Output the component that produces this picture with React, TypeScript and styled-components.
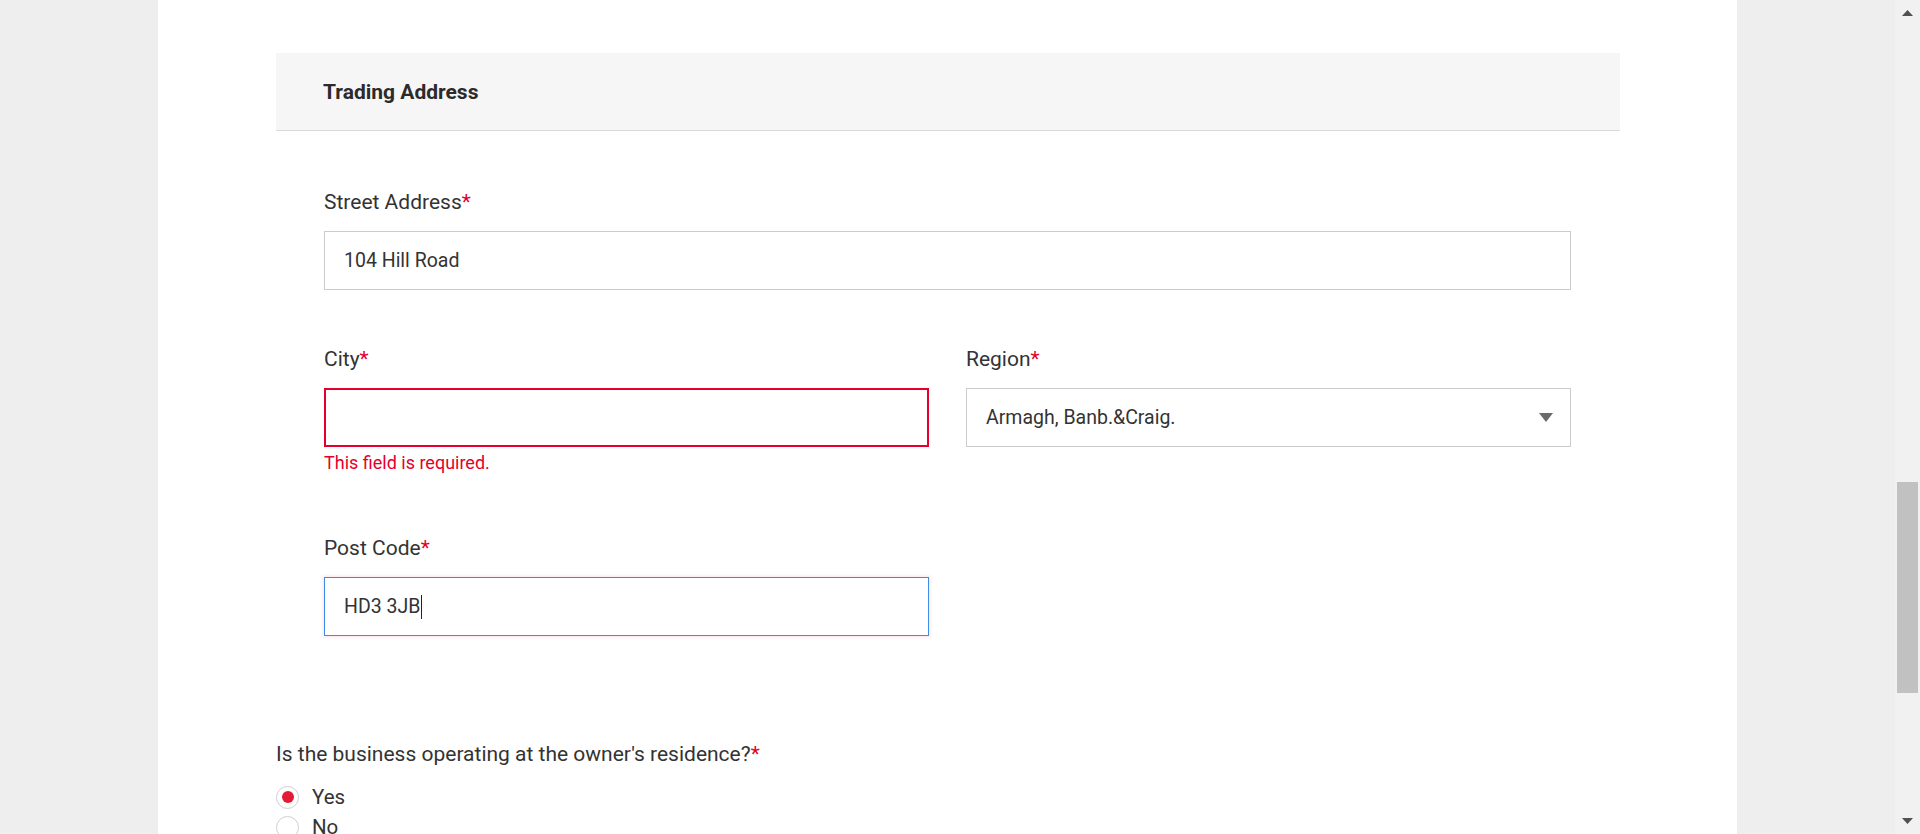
import React from "react";
import styled, { createGlobalStyle } from "styled-components";

const GlobalStyle = createGlobalStyle`
  html, body {
    margin: 0;
    padding: 0;
    height: 100%;
    overflow: hidden;
    background: #eeeeee;
  }
  #root { height: 100%; }
  * { box-sizing: border-box; }
`;

const Screen = styled.div`
  display: flex;
  height: 834px;
  width: 1920px;
  font-family: Roboto, "Liberation Sans", Arial, sans-serif;
  color: #333333;
  overflow: hidden;
`;

const Viewport = styled.div`
  flex: 1;
  background: #eeeeee;
  display: flex;
  justify-content: center;
  overflow: hidden;
`;

const Page = styled.main`
  width: 1579px;
  height: 100%;
  background: #ffffff;
  padding: 53px 117px 0 118px;
`;

const SectionHeader = styled.div`
  height: 78px;
  background: #f6f6f6;
  border-bottom: 1px solid #d9d9d9;
  display: flex;
  align-items: center;
  padding-left: 47px;
  font-size: 21px;
  font-weight: 700;
  color: #2b2b2b;
`;

const Fields = styled.div`
  padding: 59px 49px 0 48px;
  display: flex;
  flex-direction: column;
`;

const Row = styled.div<{ $last?: boolean }>`
  display: grid;
  grid-template-columns: 1fr 1fr;
  column-gap: 37px;
  margin-bottom: ${(p) => (p.$last ? "0" : "62px")};
`;

const Field = styled.div<{ $full?: boolean }>`
  display: flex;
  flex-direction: column;
  margin-bottom: ${(p) => (p.$full ? "57px" : "0")};
`;

const Label = styled.label`
  font-size: 21px;
  line-height: 25px;
  margin-bottom: 16px;
  color: #333333;
`;

const Req = styled.span`
  color: #e4002b;
`;

const Input = styled.div<{ $state?: "error" | "focus" }>`
  height: 59px;
  border: ${(p) =>
    p.$state === "error"
      ? "2px solid #e4002b"
      : p.$state === "focus"
      ? "1px solid #3a8ee8"
      : "1px solid #cccccc"};
  box-shadow: ${(p) =>
    p.$state === "focus" ? "0 0 3px 1px rgba(240, 120, 140, 0.22)" : "none"};
  background: #ffffff;
  display: flex;
  align-items: center;
  padding: 0 ${(p) => (p.$state === "error" ? "18px" : "19px")};
  font-size: 19.5px;
  color: #333333;
`;

const Caret = styled.span`
  display: inline-block;
  width: 1px;
  height: 24px;
  background: #222;
  margin-left: 1px;
`;

const Select = styled(Input)`
  justify-content: space-between;
  padding-right: 17px;
`;

const ErrorText = styled.div`
  font-size: 18px;
  line-height: 22px;
  margin-top: 5px;
  color: #e4002b;
`;

const Question = styled.div`
  margin-top: 106px;
  font-size: 21px;
  line-height: 25px;
  color: #333333;
`;

const RadioGroup = styled.div`
  margin-top: 15px;
  display: flex;
  flex-direction: column;
`;

const RadioRow = styled.div`
  display: flex;
  align-items: center;
  height: 30px;
  gap: 13px;
  font-size: 20.5px;
  color: #333333;
`;

const RadioCircle = styled.span<{ $checked?: boolean }>`
  width: 23px;
  height: 23px;
  border-radius: 50%;
  border: 1px solid #cfcfcf;
  background: #fff;
  display: flex;
  align-items: center;
  justify-content: center;
  &::after {
    content: "";
    width: 12px;
    height: 12px;
    border-radius: 50%;
    background: ${(p) => (p.$checked ? "#e31b35" : "transparent")};
  }
`;

const Scrollbar = styled.div`
  width: 25px;
  height: 100%;
  background: #f1f1f1;
  display: flex;
  flex-direction: column;
  align-items: center;
`;

const ScrollArrow = styled.div`
  height: 26px;
  width: 100%;
  display: flex;
  align-items: center;
  justify-content: center;
`;

const Track = styled.div`
  flex: 1;
  width: 100%;
  padding: 0 2px;
`;

const Thumb = styled.div<{ $offset: number; $size: number }>`
  margin-top: ${(p) => p.$offset}px;
  height: ${(p) => p.$size}px;
  background: #c1c1c1;
`;

const Arrow = ({ up }: { up?: boolean }) => (
  <svg width="11" height="6" viewBox="0 0 11 6">
    <polygon points={up ? "5.5,0 11,6 0,6" : "0,0 11,0 5.5,6"} fill="#505050" />
  </svg>
);

export default function App() {
  return (
    <>
      <GlobalStyle />
      <Screen>
        <Viewport>
          <Page>
            <SectionHeader>Trading Address</SectionHeader>
            <Fields>
              <Field $full>
                <Label>
                  Street Address<Req>*</Req>
                </Label>
                <Input>104 Hill Road</Input>
              </Field>
              <Row>
                <Field>
                  <Label>
                    City<Req>*</Req>
                  </Label>
                  <Input $state="error" />
                  <ErrorText>This field is required.</ErrorText>
                </Field>
                <Field>
                  <Label>
                    Region<Req>*</Req>
                  </Label>
                  <Select>
                    <span>Armagh, Banb.&amp;Craig.</span>
                    <svg width="14" height="9" viewBox="0 0 14 9">
                      <polygon points="0,0 14,0 7,9" fill="#6b6b6b" />
                    </svg>
                  </Select>
                </Field>
              </Row>
              <Row $last>
                <Field>
                  <Label>
                    Post Code<Req>*</Req>
                  </Label>
                  <Input $state="focus">
                    HD3 3JB
                    <Caret />
                  </Input>
                </Field>
              </Row>
            </Fields>
            <Question>
              Is the business operating at the owner's residence?<Req>*</Req>
            </Question>
            <RadioGroup>
              <RadioRow>
                <RadioCircle $checked />
                Yes
              </RadioRow>
              <RadioRow>
                <RadioCircle />
                No
              </RadioRow>
            </RadioGroup>
          </Page>
        </Viewport>
        <Scrollbar>
          <ScrollArrow>
            <Arrow up />
          </ScrollArrow>
          <Track>
            <Thumb $offset={456} $size={211} />
          </Track>
          <ScrollArrow>
            <Arrow />
          </ScrollArrow>
        </Scrollbar>
      </Screen>
    </>
  );
}
